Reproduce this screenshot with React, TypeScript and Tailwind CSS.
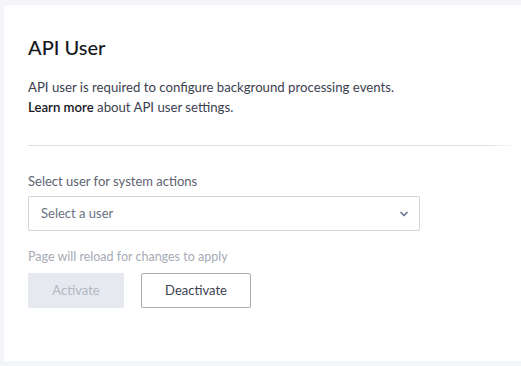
import { ChevronDown } from "lucide-react";

export default function App() {
  return (
    <div
      className="w-[521px] h-[366px] overflow-hidden bg-[#f4f5f8] pl-[4px] pt-[5px]"
      style={{ fontFamily: "Lato, 'Open Sans', sans-serif" }}
    >
      <div className="h-[356px] bg-white rounded-tl-[4px] pl-[24px] pt-[29px]">
        {/* ヘッダー */}
        <h1 className="text-[20px] leading-[26px] font-medium text-[#16181d]">API User</h1>

        <div className="mt-[17px] text-[13.2px] leading-[20px] text-[#3c4150]">
          <p>API user is required to configure background processing events.</p>
          <p>
            <span className="font-semibold text-[#16181d]">Learn more</span> about API user settings.
          </p>
        </div>

        <div className="mt-[28px] h-px bg-gradient-to-r from-[#dcdee4] from-[92%] to-transparent" />

        <div className="mt-[26px]">
          <label className="block text-[13px] leading-[18px] text-[#5d6271]">
            Select user for system actions
          </label>
          <button className="mt-[6px] w-[392px] h-[35px] flex items-center justify-between border border-[#d0d3da] rounded-[2px] pl-[12px] pr-[9px] text-[13px] text-[#6b7080]">
            <span>Select a user</span>
            <ChevronDown size={12} strokeWidth={3.5} className="text-[#6c7a99]" />
          </button>
        </div>

        <p className="mt-[17px] text-[12.5px] leading-[18px] text-[#a6abb6]">
          Page will reload for changes to apply
        </p>

        <div className="mt-[7px] flex gap-[17px]">
          <button className="w-[96px] h-[35px] rounded-[2px] bg-[#e6e9ef] text-[13px] text-[#b3b8c2]">
            Activate
          </button>
          <button className="w-[110px] h-[35px] rounded-[2px] border border-[#a9adb8] text-[13px] text-[#3c4150]">
            Deactivate
          </button>
        </div>
      </div>
    </div>
  );
}
